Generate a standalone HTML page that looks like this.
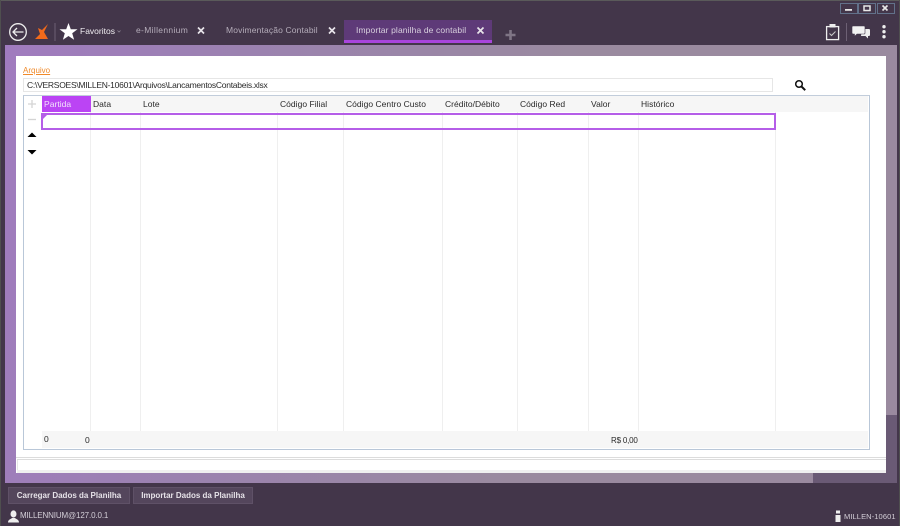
<!DOCTYPE html>
<html><head><meta charset="utf-8">
<style>
html,body{margin:0;padding:0;width:900px;height:526px;overflow:hidden;background:#43364a}
body{position:relative;font-family:"Liberation Sans",sans-serif;font-size:8.5px;color:#333}
.a{position:absolute;white-space:nowrap}
.h{top:99px;font-size:8.5px;letter-spacing:.03px;color:#2a2a2a;line-height:11px}
.v{position:absolute;top:112px;width:1px;height:319px;background:#efefef}
.t{top:24px;font-size:8.5px;color:#b5adba;line-height:12px}
.btn{position:absolute;top:487px;height:15px;background:#54465c;border:1px solid #5f5167;color:#e6e2e8;font-weight:bold;font-size:8px;line-height:15px;text-align:center;white-space:nowrap}
.wb{position:absolute;top:3px;height:9px;border:1px solid #62718a;background:#43364a}
</style></head><body>
<div class="a" style="left:0;top:0;width:900px;height:1px;background:#5a5a5a"></div>
<div class="a" style="left:0;top:0;width:1px;height:526px;background:#4f4f4f"></div>
<div class="a" style="left:899px;top:0;width:1px;height:526px;background:#4f4f4f"></div>
<div class="a" style="left:5px;top:45px;width:892px;height:438px;background:linear-gradient(100deg,#a07bbf 0%,#9b82b0 25%,#9a8a9f 60%,#9a8a9f 100%)"></div>
<div class="a" style="left:886px;top:415px;width:11px;height:68px;background:#6a5a75"></div>
<div class="a" style="left:813px;top:473px;width:84px;height:10px;background:#6a5a75"></div>
<div class="a" style="left:16px;top:56px;width:870px;height:417px;background:#fff"></div>

<svg class="a" style="left:0;top:0" width="130" height="45" viewBox="0 0 130 45">
<circle cx="18" cy="32" r="8.300" fill="none" stroke="#eee" stroke-width="1.300"/>
<path d="M23.500 32H13M17 28l-4 4 4 4" fill="none" stroke="#eee" stroke-width="1.300"/>
<path d="M48 24L44 32 48 39H35L40 34 38 28 42 30Z" fill="#f26a1b"/>
<rect x="54.500" y="23" width="1" height="18" fill="#6d6074"/>
<path d="M68.500 23l2.300 6.300h6.700l-5.300 4 1.900 6.500-5.600-3.800-5.600 3.800 1.900-6.500-5.300-4h6.700z" fill="#fff"/>
<path d="M117.500 30.500l1.500 1.500 1.500-1.500" fill="none" stroke="#8c8292" stroke-width=".8"/>
</svg>
<div class="a" style="left:80px;top:25px;color:#f0edf1;font-size:8.5px;line-height:12px">Favoritos</div>
<div class="a t" style="left:136px;letter-spacing:.33px">e-Millennium</div>
<div class="a t" style="left:226px;letter-spacing:.14px">Movimentação Contabil</div>
<div class="a" style="left:344px;top:20px;width:148px;height:23px;background:#5e3a78"></div>
<div class="a" style="left:344px;top:40px;width:148px;height:3px;background:#a845dc"></div>
<div class="a t" style="left:356px;color:#d8d0de;letter-spacing:.12px">Importar planilha de contabil</div>
<svg class="a" style="left:0;top:0" width="900" height="45" viewBox="0 0 900 45">
<g stroke="#e8e4ea" stroke-width="1.700" fill="none">
<path d="M198 27.500l6 6M204 27.500l-6 6"/>
<path d="M329 27.500l6 6M335 27.500l-6 6"/>
<path d="M477.500 27.500l6 6M483.500 27.500l-6 6"/>
</g>
<path d="M510.500 30v10M505.500 35h10" stroke="#7f7585" stroke-width="2.600" fill="none"/>
<rect x="826.600" y="26.600" width="12" height="13" fill="none" stroke="#eee" stroke-width="1.300"/>
<rect x="829.500" y="24" width="6" height="3.500" fill="#eee"/>
<path d="M829.500 33.500l2 2 4-4" fill="none" stroke="#ccc" stroke-width="1"/>
<rect x="846" y="23" width="1" height="18" fill="#6d6074"/>
<path d="M862 29h7a1 1 0 0 1 1 1v5a1 1 0 0 1-1 1h-1v2.500l-2.500-2.500H861z" fill="#eee"/>
<path d="M853 26h11a1 1 0 0 1 1 1v6a1 1 0 0 1-1 1h-7l-2.500 2.500V34H853a1 1 0 0 1-1-1v-6a1 1 0 0 1 1-1z" fill="#f2f2f2" stroke="#43364a" stroke-width=".6"/>
<circle cx="884" cy="26.700" r="1.700" fill="#eee"/><circle cx="884" cy="31.700" r="1.700" fill="#eee"/><circle cx="884" cy="36.700" r="1.700" fill="#eee"/>
</svg>

<div class="wb" style="left:840px;width:16px"></div>
<div class="wb" style="left:858px;width:16px"></div>
<div class="wb" style="left:877px;width:16px"></div>
<svg class="a" style="left:0;top:0" width="900" height="16" viewBox="0 0 900 16">
<rect x="845" y="9" width="7" height="1.800" fill="#e8e8e8"/>
<rect x="864" y="6" width="6" height="4.500" fill="none" stroke="#e8e8e8" stroke-width="1.500"/>
<path d="M882.500 5.500l5 5M887.500 5.500l-5 5" stroke="#e8e8e8" stroke-width="1.600"/>
</svg>

<div class="a" style="left:23px;top:65px;color:#f08a2a;font-size:8px;text-decoration:underline;line-height:11px">Arquivo</div>
<div class="a" style="left:23px;top:78px;width:748px;height:12px;border:1px solid #e6e6e6;background:#fff"></div>
<div class="a" style="left:27px;top:79px;font-size:8.5px;letter-spacing:-.26px;color:#2a2a2a;line-height:12px">C:\VERSOES\MILLEN-10601\Arquivos\LancamentosContabeis.xlsx</div>
<svg class="a" style="left:793px;top:78px" width="15" height="15" viewBox="0 0 15 15">
<circle cx="6" cy="6" r="3.300" fill="none" stroke="#111" stroke-width="1.500"/>
<path d="M8.500 8.500l3.700 3.700" stroke="#111" stroke-width="2"/>
</svg>

<div class="a" style="left:23px;top:95px;width:845px;height:353px;border:1px solid #b9c7d8;border-top-color:#c2cddb;background:#fff"></div>
<div class="a" style="left:42px;top:96px;width:826px;height:16px;background:#f6f6f6"></div>
<div class="a" style="left:42px;top:96px;width:49px;height:16px;background:#bb44f4"></div>
<div class="a" style="left:42px;top:431px;width:826px;height:17px;background:#f6f6f6"></div>
<div class="v" style="left:90px"></div><div class="v" style="left:140px"></div><div class="v" style="left:277px"></div><div class="v" style="left:343px"></div><div class="v" style="left:442px"></div><div class="v" style="left:517px"></div><div class="v" style="left:588px"></div><div class="v" style="left:638px"></div><div class="v" style="left:775px"></div>
<div class="a" style="left:41px;top:113px;width:731px;height:13px;border:2px solid #b55ee8"></div>
<div class="a" style="left:43px;top:115px;width:0;height:0;border-top:4px solid #b55ee8;border-right:4px solid transparent"></div>

<div class="a h" style="left:44px;color:#f3e3fb">Partida</div>
<div class="a h" style="left:93px">Data</div>
<div class="a h" style="left:143px">Lote</div>
<div class="a h" style="left:280px">Código Filial</div>
<div class="a h" style="left:346px">Código Centro Custo</div>
<div class="a h" style="left:445px">Crédito/Débito</div>
<div class="a h" style="left:520px">Código Red</div>
<div class="a h" style="left:591px">Valor</div>
<div class="a h" style="left:641px">Histórico</div>

<svg class="a" style="left:24px;top:96px" width="18" height="62" viewBox="0 0 18 62">
<path d="M8 4v8M4 8h8" stroke="#d4d4d4" stroke-width="1.300"/>
<path d="M4 23.500h8" stroke="#d4d4d4" stroke-width="1.300"/>
<path d="M8 36.500L12.500 41H3.500Z" fill="#000"/>
<path d="M3.500 54H12.500L8 58.500Z" fill="#000"/>
</svg>

<div class="a" style="left:44px;top:434px;font-size:8.500px;color:#2a2a2a;line-height:11px">0</div>
<div class="a" style="left:85px;top:435px;font-size:8.500px;color:#2a2a2a;line-height:11px">0</div>
<div class="a" style="left:611px;top:435px;font-size:8px;letter-spacing:-.2px;color:#2a2a2a;line-height:11px">R$ 0,00</div>

<div class="a" style="left:16px;top:457px;width:870px;height:1px;background:#dcdcdc"></div>
<div class="a" style="left:17px;top:459px;width:869px;height:1px;background:#dcdcdc"></div>
<div class="a" style="left:17px;top:460px;width:1px;height:10px;background:#e6e6e6"></div>
<div class="a" style="left:17px;top:470px;width:869px;height:3px;background:#f0f0f0"></div>

<div class="btn" style="left:8px;width:120px">Carregar Dados da Planilha</div>
<div class="btn" style="left:133px;width:118px">Importar Dados da Planilha</div>

<svg class="a" style="left:7px;top:510px" width="13" height="13" viewBox="0 0 13 13">
<ellipse cx="6.500" cy="4" rx="3" ry="3.600" fill="#eee"/>
<path d="M1 12.500c0-3 3-3.500 4-4.500h3c1 1 4 1.500 4 4.500z" fill="#eee"/>
</svg>
<div class="a" style="left:20px;top:510px;color:#d4cfd8;font-size:8px;letter-spacing:-.13px;line-height:12px">MILLENNIUM@127.0.0.1</div>
<svg class="a" style="left:834px;top:510px" width="8" height="13" viewBox="0 0 8 13">
<rect x="2" y="0.500" width="4" height="3" fill="#eee"/><path d="M1.500 5h5v7h-5z" fill="#eee"/>
</svg>
<div class="a" style="left:844px;top:511px;color:#d4cfd8;font-size:7.500px;letter-spacing:.1px;line-height:12px">MILLEN-10601</div>
</body></html>
